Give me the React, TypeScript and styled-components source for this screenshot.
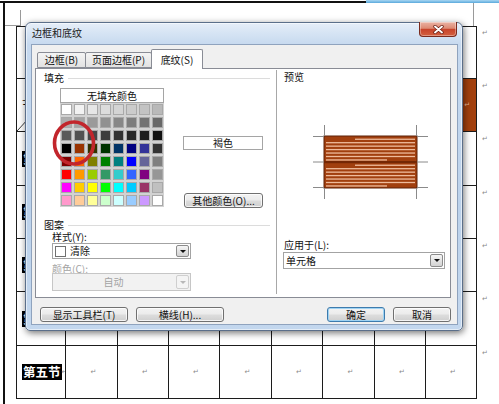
import React from "react";
import styled, { createGlobalStyle } from "styled-components";

const GlobalStyle = createGlobalStyle`
  *, *::before, *::after { box-sizing: border-box; }
  html, body { margin: 0; padding: 0; background: #fff; }
  body { font-family: "Noto Sans CJK SC", "Noto Sans", sans-serif; overflow: hidden; }
  #root { width: 499px; height: 404px; }
`;

/* ---------- background document ---------- */
const Doc = styled.div`
  position: relative;
  width: 499px;
  height: 404px;
  overflow: hidden;
  background: #fff;
  display: flex;
  flex-direction: column;
`;

const TopStrip = styled.div`
  display: flex;
  height: 3px;
  flex-shrink: 0;
`;

const TopStripBlack = styled.div`
  width: 366px;
  background: #111;
  border-top: 1px solid #fff;
`;

const TopStripBlue = styled.div`
  flex: 1;
  background: linear-gradient(#a8d6f2, #5aa9dc);
`;

const Sheet = styled.div`
  flex: 1;
  margin-left: 3px;
  border-left: 2px solid #111;
  display: flex;
  flex-direction: column;
`;

const MarksRow = styled.div`
  height: 23px;
  display: flex;
  align-items: flex-end;
  flex-shrink: 0;
`;

const LeftMark = styled.div`
  width: 16px;
  height: 16px;
  border-right: 1px solid #9a9a9a;
  border-bottom: 1px solid #9a9a9a;
`;

const Spacer = styled.div`
  flex: 1;
`;

const RightMark = styled.div`
  width: 17px;
  height: 23px;
  margin-right: 9px;
  border-left: 1px solid #9a9a9a;
`;

const Table = styled.div`
  margin-left: 11px;
  display: grid;
  grid-template-columns: 50px 52px 51px 51px 52px 51px 52px 51px 51px 20px;
  grid-template-rows: 53px 53px 54px 53px 53px 54px 53px;
`;

const Cell = styled.div<{ $first?: boolean; $top?: boolean; $shade?: boolean }>`
  border-right: 1px solid #1c1c1c;
  border-bottom: 1px solid #1c1c1c;
  border-top: ${(p) => (p.$top ? "1px solid #1c1c1c" : "none")};
  border-left: ${(p) => (p.$first ? "1px solid #1c1c1c" : "none")};
  background: ${(p) => (p.$shade ? "#a3400e" : "transparent")};
  display: flex;
  align-items: center;
  justify-content: ${(p) => (p.$first ? "flex-start" : p.$shade ? "flex-end" : "center")};
  padding-left: ${(p) => (p.$first ? "5px" : "4px")};
  padding-right: ${(p) => (p.$shade ? "6px" : "0")};
  white-space: nowrap;
  overflow: hidden;
`;

const CellMark = styled.span<{ $light?: boolean }>`
  font-family: "DejaVu Sans", sans-serif;
  font-size: 7px;
  color: ${(p) => (p.$light ? "#e8b89c" : "#8a8a8a")};
  line-height: 1;
`;

const EndMark = styled.div`
  padding: 4px 0 0 5px;
  font-family: "DejaVu Sans", sans-serif;
  font-size: 7px;
  color: #8a8a8a;
  line-height: 1;
`;

const SectionLabel = styled.span`
  background: #000;
  color: #fff;
  font-weight: 700;
  font-size: 12.5px;
  line-height: 16px;
  padding: 0 1px;
  white-space: nowrap;
`;

const PlainLabel = styled.span`
  font-size: 12px;
  color: #111;
  line-height: 16px;
  white-space: nowrap;
`;

const DiagonalCell = styled(Cell)`
  background: linear-gradient(
    to bottom right,
    transparent calc(50% - 0.7px),
    #333 50%,
    transparent calc(50% + 0.7px)
  );
`;

/* ---------- dialog ---------- */
const Window = styled.div`
  position: absolute;
  left: 25px;
  top: 22px;
  width: 438px;
  height: 309px;
  border: 1px solid #5b6f8a;
  border-radius: 6px 6px 5px 5px;
  background: linear-gradient(
    180deg,
    #e6eef8 0px,
    #d6e4f4 10px,
    #c6d9ef 22px,
    #bcd2eb 60%,
    #c3d7ee 100%
  );
  box-shadow: 1px 2px 7px rgba(0, 0, 0, 0.55), inset 0 0 0 1px rgba(255, 255, 255, 0.55);
  display: flex;
  flex-direction: column;
  padding: 0 5px 6px 6px;
  font-size: 10px;
  color: #111;
`;

const TitleBar = styled.div`
  height: 22px;
  display: flex;
  justify-content: space-between;
  align-items: flex-start;
  flex-shrink: 0;
`;

const TitleText = styled.div`
  margin-top: 4px;
  font-size: 10px;
  line-height: 12px;
  color: #1a1a1a;
`;

const CloseButton = styled.div`
  margin-top: -1px;
  width: 38px;
  height: 15px;
  border: 1px solid #7a2a1d;
  border-top: none;
  border-radius: 0 0 4px 4px;
  background: linear-gradient(
    180deg,
    #eab3a4 0%,
    #dd8a73 45%,
    #c8442b 52%,
    #d3603f 100%
  );
  box-shadow: inset 0 0 0 1px rgba(255, 255, 255, 0.35);
  display: flex;
  align-items: center;
  justify-content: center;
`;

const Client = styled.div`
  flex: 1;
  background: #f0f0f0;
  box-shadow: 0 0 0 1px #8fa3be;
  display: flex;
  flex-direction: column;
  padding: 4px 6px 0 3px;
`;

const TabsRow = styled.div`
  height: 19px;
  display: flex;
  align-items: flex-end;
  padding-left: 2px;
  position: relative;
  z-index: 1;
  flex-shrink: 0;
`;

const Tab = styled.div<{ $w: number; $active?: boolean }>`
  width: ${(p) => p.$w}px;
  height: ${(p) => (p.$active ? 20 : 16)}px;
  margin-left: -1px;
  margin-bottom: ${(p) => (p.$active ? -1 : 0)}px;
  border: 1px solid #898c95;
  border-bottom: ${(p) => (p.$active ? "none" : "1px solid #898c95")};
  border-radius: 2px 2px 0 0;
  background: ${(p) => (p.$active ? "#fff" : "linear-gradient(#f4f4f4, #e2e2e2)")};
  display: flex;
  align-items: center;
  justify-content: center;
  padding-top: ${(p) => (p.$active ? 1 : 0)}px;
  line-height: 12px;
  white-space: nowrap;
  &:first-child {
    margin-left: 0;
  }
`;

const Panel = styled.div`
  height: 230px;
  border: 1px solid #898c95;
  background: #fff;
  display: flex;
  flex-shrink: 0;
`;

const LeftCol = styled.div`
  width: 240px;
  padding: 3px 0 0 8px;
  display: flex;
  flex-direction: column;
`;

const Divider = styled.div`
  width: 1px;
  background: #a8a8a8;
  margin: 1px 0 3px 0;
`;

const RightCol = styled.div`
  flex: 1;
  padding: 2px 0 0 7px;
  display: flex;
  flex-direction: column;
`;

const Legend = styled.div<{ $mt?: number }>`
  margin-top: ${(p) => p.$mt ?? 0}px;
  height: 12px;
  line-height: 12px;
  display: flex;
  align-items: center;
  gap: 4px;
  margin-right: 6px;
  &::after {
    content: "";
    flex: 1;
    border-top: 1px solid #dcdcdc;
  }
`;

const FieldLabel = styled.div<{ $mt?: number; $ml?: number; $disabled?: boolean }>`
  margin-top: ${(p) => p.$mt ?? 0}px;
  margin-left: ${(p) => p.$ml ?? 0}px;
  height: 12px;
  line-height: 12px;
  white-space: nowrap;
  color: ${(p) => (p.$disabled ? "#a3a3a3" : "#111")};
`;

const PaletteRow = styled.div`
  margin-top: 4px;
  margin-left: 16px;
  display: flex;
`;

const Palette = styled.div`
  position: relative;
  width: 104px;
`;

const NoFill = styled.div`
  height: 15px;
  border: 1px solid #a5a5a5;
  background: #fff;
  text-align: center;
  line-height: 13px;
`;

const Swatches = styled.div`
  display: grid;
  grid-template-columns: repeat(8, 11px);
  grid-auto-rows: 11px;
  gap: 2px;
  padding: 1px;
  background: #d2d2d2;
`;

const Swatch = styled.div<{ $c: string }>`
  background: ${(p) => p.$c};
  border: 1px solid #a9a9a9;
`;

const CircleMark = styled.svg`
  position: absolute;
  left: -8px;
  top: 32px;
  overflow: visible;
`;

const SideCol = styled.div`
  margin-left: 19px;
  display: flex;
  flex-direction: column;
`;

const ColorName = styled.div`
  margin-top: 48px;
  width: 80px;
  height: 14px;
  border: 1px solid #a5a5a5;
  background: #fff;
  text-align: center;
  line-height: 12px;
`;

const WinButton = styled.div<{ $w: number; $default?: boolean; $mt?: number; $ml?: number }>`
  width: ${(p) => p.$w}px;
  height: 15px;
  margin-top: ${(p) => p.$mt ?? 0}px;
  margin-left: ${(p) => p.$ml ?? 0}px;
  border: 1px solid ${(p) => (p.$default ? "#3d7bad" : "#707070")};
  border-radius: 3px;
  background: linear-gradient(180deg, #f3f3f3 0%, #ebebeb 48%, #dddddd 52%, #cfcfcf 100%);
  box-shadow: inset 0 0 0 1px ${(p) => (p.$default ? "#9fd3f3" : "rgba(255,255,255,0.75)")};
  display: flex;
  align-items: center;
  justify-content: center;
  line-height: 12px;
  white-space: nowrap;
  color: #111;
  flex-shrink: 0;
`;

const Select = styled.div<{ $w: number; $h: number; $mt?: number; $ml?: number; $disabled?: boolean }>`
  width: ${(p) => p.$w}px;
  height: ${(p) => p.$h}px;
  margin-top: ${(p) => p.$mt ?? 0}px;
  margin-left: ${(p) => p.$ml ?? 0}px;
  border: 1px solid ${(p) => (p.$disabled ? "#c6c6c6" : "#a3a3a3")};
  background: ${(p) => (p.$disabled ? "#f2f2f2" : "#fff")};
  display: flex;
  align-items: center;
  padding: 0 1px 0 2px;
  gap: 4px;
  line-height: 12px;
  color: ${(p) => (p.$disabled ? "#a3a3a3" : "#111")};
`;

const SelectValue = styled.div<{ $center?: boolean }>`
  flex: 1;
  text-align: ${(p) => (p.$center ? "center" : "left")};
`;

const NoneBox = styled.div`
  width: 11px;
  height: 11px;
  border: 1px solid #707070;
  background: #fff;
`;

const ArrowButton = styled.div<{ $disabled?: boolean }>`
  width: 13px;
  height: calc(100% - 2px);
  border: 1px solid ${(p) => (p.$disabled ? "#cfcfcf" : "#8c8c8c")};
  border-radius: 2px;
  background: ${(p) =>
    p.$disabled ? "#f4f4f4" : "linear-gradient(180deg, #f6f6f6 0%, #e4e4e4 50%, #d3d3d3 100%)"};
  display: flex;
  align-items: center;
  justify-content: center;
  &::after {
    content: "";
    border-left: 3px solid transparent;
    border-right: 3px solid transparent;
    border-top: 3px solid ${(p) => (p.$disabled ? "#b8b8b8" : "#111")};
  }
`;

const PreviewSvg = styled.svg`
  margin-top: 37px;
  margin-left: 24px;
  display: block;
`;

const ButtonsRow = styled.div`
  margin-top: 9px;
  padding-left: 5px;
  display: flex;
  gap: 8px;
`;

const ButtonsSpacer = styled.div`
  flex: 1;
`;

/* ---------- data ---------- */
const palette: string[][] = [
  ["#ffffff", "#f2f2f2", "#e6e6e6", "#dcdcdc", "#d4d4d4", "#cbcbcb", "#c3c3c3", "#b9b9b9"],
  ["#adadad", "#a4a4a4", "#9a9a9a", "#919191", "#878787", "#7d7d7d", "#737373", "#686868"],
  ["#5a5a5a", "#515151", "#474747", "#3c3c3c", "#313131", "#272727", "#1c1c1c", "#111111"],
  ["#000000", "#993300", "#333300", "#003300", "#003366", "#000080", "#333399", "#333333"],
  ["#800000", "#ff6600", "#808000", "#008000", "#008080", "#0000ff", "#666699", "#808080"],
  ["#ff0000", "#ff9900", "#99cc00", "#339966", "#33cccc", "#3366ff", "#800080", "#969696"],
  ["#ff00ff", "#ffcc00", "#ffff00", "#00ff00", "#00ffff", "#00ccff", "#993366", "#c0c0c0"],
  ["#ff99cc", "#ffcc99", "#ffff99", "#ccffcc", "#ccffff", "#99ccff", "#cc99ff", "#ffffff"],
];

const firstColumn: React.ReactNode[] = [
  null,
  <PlainLabel key="a">节次</PlainLabel>,
  <SectionLabel key="b">第一节</SectionLabel>,
  <SectionLabel key="c">第二节</SectionLabel>,
  <SectionLabel key="d">第三节</SectionLabel>,
  <SectionLabel key="e">第四节</SectionLabel>,
  <React.Fragment key="f">
    <SectionLabel>第五节</SectionLabel>
    <CellMark>↵</CellMark>
  </React.Fragment>,
];

const Preview: React.FC = () => {
  const stripes: React.ReactNode[] = [];
  [16, 42].forEach((top, h) => {
    for (let i = 0; i < 7; i++) {
      const y = top + 2.6 + i * 3.45;
      const x1 = i === 0 ? 47 : 18;
      const x2 = i === 6 ? 79 : 107;
      stripes.push(
        <rect key={`${h}-${i}`} x={x1} y={y} width={x2 - x1} height={1.3} fill="#eebb9c" />
      );
    }
  });
  const tick = "#8a8a8a";
  return (
    <PreviewSvg width={125} height={84} viewBox="0 0 125 84">
      <rect x={16} y={16} width={93} height={52} fill="#a13f0e" stroke="#5e2308" strokeWidth={1} />
      {stripes}
      <rect x={16} y={41} width={93} height={2.2} fill="#742704" />
      <g stroke={tick} strokeWidth={1}>
        <line x1={5} y1={16.5} x2={16} y2={16.5} />
        <line x1={5} y1={42} x2={16} y2={42} />
        <line x1={5} y1={67.5} x2={16} y2={67.5} />
        <line x1={109} y1={16.5} x2={120} y2={16.5} />
        <line x1={109} y1={42} x2={120} y2={42} />
        <line x1={109} y1={67.5} x2={120} y2={67.5} />
        <line x1={16.5} y1={5} x2={16.5} y2={16} />
        <line x1={108.5} y1={5} x2={108.5} y2={16} />
        <line x1={16.5} y1={68} x2={16.5} y2={79} />
        <line x1={108.5} y1={68} x2={108.5} y2={79} />
      </g>
    </PreviewSvg>
  );
};

/* cells whose paragraph marks are hidden under the dialog are left empty */
const markVisible = (r: number, c: number) => r === 6 || (r === 1 && c === 7);

export default function App() {
  const rows = 7;
  return (
    <>
      <GlobalStyle />
      <Doc>
        <TopStrip>
          <TopStripBlack />
          <TopStripBlue />
        </TopStrip>
        <Sheet>
          <MarksRow>
            <LeftMark />
            <Spacer />
            <RightMark />
          </MarksRow>
          <Table>
            {Array.from({ length: rows }).map((_, r) => (
              <React.Fragment key={r}>
                {r === 1 ? (
                  <DiagonalCell $first>{firstColumn[r]}</DiagonalCell>
                ) : (
                  <Cell $first $top={r === 0}>
                    {firstColumn[r]}
                  </Cell>
                )}
                {Array.from({ length: 8 }).map((__, c) => {
                  const shade = r === 1 && c === 7;
                  return (
                    <Cell key={c} $top={r === 0} $shade={shade}>
                      {markVisible(r, c) && <CellMark $light={shade}>↵</CellMark>}
                    </Cell>
                  );
                })}
                <EndMark>↵</EndMark>
              </React.Fragment>
            ))}
          </Table>
        </Sheet>

        <Window>
          <TitleBar>
            <TitleText>边框和底纹</TitleText>
            <CloseButton>
              <svg width="11" height="9" viewBox="0 0 11 9">
                <path d="M2 1.5 L9 7.5 M9 1.5 L2 7.5" stroke="#6a1e12" strokeWidth="3.4" strokeLinecap="round" />
                <path d="M2 1.5 L9 7.5 M9 1.5 L2 7.5" stroke="#ffffff" strokeWidth="1.9" strokeLinecap="round" />
              </svg>
            </CloseButton>
          </TitleBar>
          <Client>
            <TabsRow>
              <Tab $w={49}>边框(B)</Tab>
              <Tab $w={67}>页面边框(P)</Tab>
              <Tab $w={52} $active>
                底纹(S)
              </Tab>
            </TabsRow>
            <Panel>
              <LeftCol>
                <Legend>填充</Legend>
                <PaletteRow>
                  <Palette>
                    <NoFill>无填充颜色</NoFill>
                    <Swatches>
                      {palette.flat().map((c, i) => (
                        <Swatch key={i} $c={c} />
                      ))}
                    </Swatches>
                    <CircleMark width={44} height={46} viewBox="0 0 44 46">
                      <ellipse cx={22} cy={23} rx={19.5} ry={21} fill="none" stroke="#c2262c" strokeWidth={3.6} />
                    </CircleMark>
                  </Palette>
                  <SideCol>
                    <ColorName>褐色</ColorName>
                    <WinButton $w={79} $mt={43} $ml={1}>
                      其他颜色(O)...
                    </WinButton>
                  </SideCol>
                </PaletteRow>
                <Legend $mt={11}>图案</Legend>
                <FieldLabel $ml={8}>样式(Y):</FieldLabel>
                <Select $w={139} $h={16} $ml={8}>
                  <NoneBox />
                  <SelectValue>清除</SelectValue>
                  <ArrowButton />
                </Select>
                <FieldLabel $ml={8} $mt={4} $disabled>
                  颜色(C):
                </FieldLabel>
                <Select $w={139} $h={18} $ml={8} $mt={-2} $disabled>
                  <SelectValue $center>自动</SelectValue>
                  <ArrowButton $disabled />
                </Select>
              </LeftCol>
              <Divider />
              <RightCol>
                <FieldLabel>预览</FieldLabel>
                <Preview />
                <FieldLabel $mt={35}>应用于(L):</FieldLabel>
                <Select $w={162} $h={17} $ml={-1} $mt={1}>
                  <SelectValue>单元格</SelectValue>
                  <ArrowButton />
                </Select>
              </RightCol>
            </Panel>
            <ButtonsRow>
              <WinButton $w={88}>显示工具栏(T)</WinButton>
              <WinButton $w={88}>横线(H)...</WinButton>
              <ButtonsSpacer />
              <WinButton $w={58} $default>
                确定
              </WinButton>
              <WinButton $w={58}>取消</WinButton>
            </ButtonsRow>
          </Client>
        </Window>
      </Doc>
    </>
  );
}
